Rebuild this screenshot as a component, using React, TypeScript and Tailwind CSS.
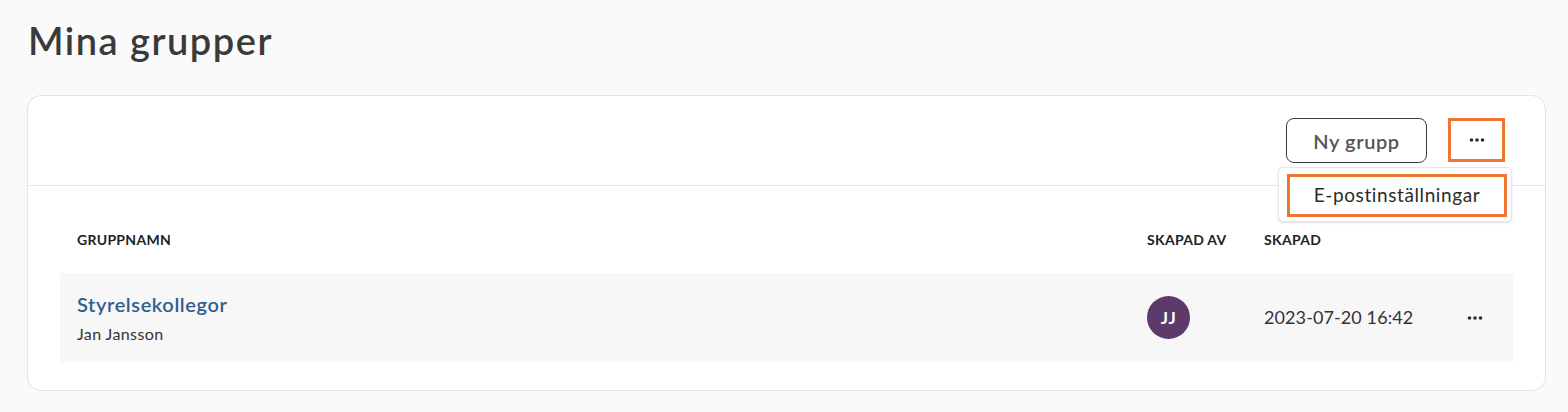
import type { FC } from "react"

const Dots: FC<{ className?: string }> = ({ className }) => (
    <svg width="16" height="4" viewBox="0 0 16 4" className={className}>
        <circle cx="2.5" cy="2" r="1.8" fill="#2b2b2b" />
        <circle cx="8" cy="2" r="1.8" fill="#2b2b2b" />
        <circle cx="13.5" cy="2" r="1.8" fill="#2b2b2b" />
    </svg>
)

const App = () => {
    return (
        <div className="min-h-[412px] w-full bg-[#fafafa] font-['Lato',sans-serif] text-[#2b2b2b] pt-[18px] pl-[27px] pr-[22px]">
            <h1 className="pl-[1px] text-[38px] leading-[44px] font-semibold tracking-[1.5px] text-[#3a3a3a]">Mina grupper</h1>

            <div className="mt-[33px] rounded-[14px] border border-[#e4e4e4] bg-white">
                {/* toolbar */}
                <div className="flex items-start justify-end gap-[21px] border-b border-[#e6e6e6] pt-[22px] pr-[40px] h-[90px]">
                    <button className="h-[45px] w-[141px] rounded-[8px] border border-[#3d3d3d] text-[20px] font-semibold tracking-[0.6px] text-[#555]">
                        Ny grupp
                    </button>
                    <div className="relative">
                        <button className="flex h-[44px] w-[57px] items-center justify-center border-[3px] border-[#ee7633]">
                            <Dots />
                        </button>
                        <div className="absolute right-[-7px] top-[49px] z-10 w-[234px] rounded-[5px] border border-[#e6e6e6] bg-white p-[6px_4px_4px_8px] shadow-sm">
                            <div className="flex h-[43px] items-center justify-center border-[3px] border-[#ee7633] text-[19px] tracking-[0.6px] text-[#2b2b2b]">
                                E-postinställningar
                            </div>
                        </div>
                    </div>
                </div>

                {/* table */}
                <div className="px-[32px] pt-[46px] pb-[28px]">
                    <div className="grid grid-cols-[1fr_117px_190px_42px] px-[17px] pb-[25px] text-[14px] font-bold uppercase tracking-[0.3px] leading-[16px] text-[#222]">
                        <span>Gruppnamn</span>
                        <span>Skapad av</span>
                        <span>Skapad</span>
                        <span />
                    </div>
                    <div className="grid h-[89px] grid-cols-[1fr_117px_190px_42px] items-center bg-[#f7f7f7] px-[17px]">
                        <div className="flex flex-col pt-[1px]">
                            <a className="text-[20px] font-semibold leading-[22px] tracking-[0.6px] text-[#2f5f8c]">Styrelsekollegor</a>
                            <span className="mt-[10px] text-[16px] leading-[18px] tracking-[0.4px] text-[#333]">Jan Jansson</span>
                        </div>
                        <div>
                            <div className="flex h-[43px] w-[43px] items-center justify-center rounded-full bg-[#5c3a6a] text-[17px] font-bold tracking-[0.5px] text-white">
                                JJ
                            </div>
                        </div>
                        <span className="text-[18px] tracking-[0.1px] text-[#333]">2023-07-20 16:42</span>
                        <div className="flex justify-center">
                            <Dots />
                        </div>
                    </div>
                </div>
            </div>
        </div>
    )
}

export default App
